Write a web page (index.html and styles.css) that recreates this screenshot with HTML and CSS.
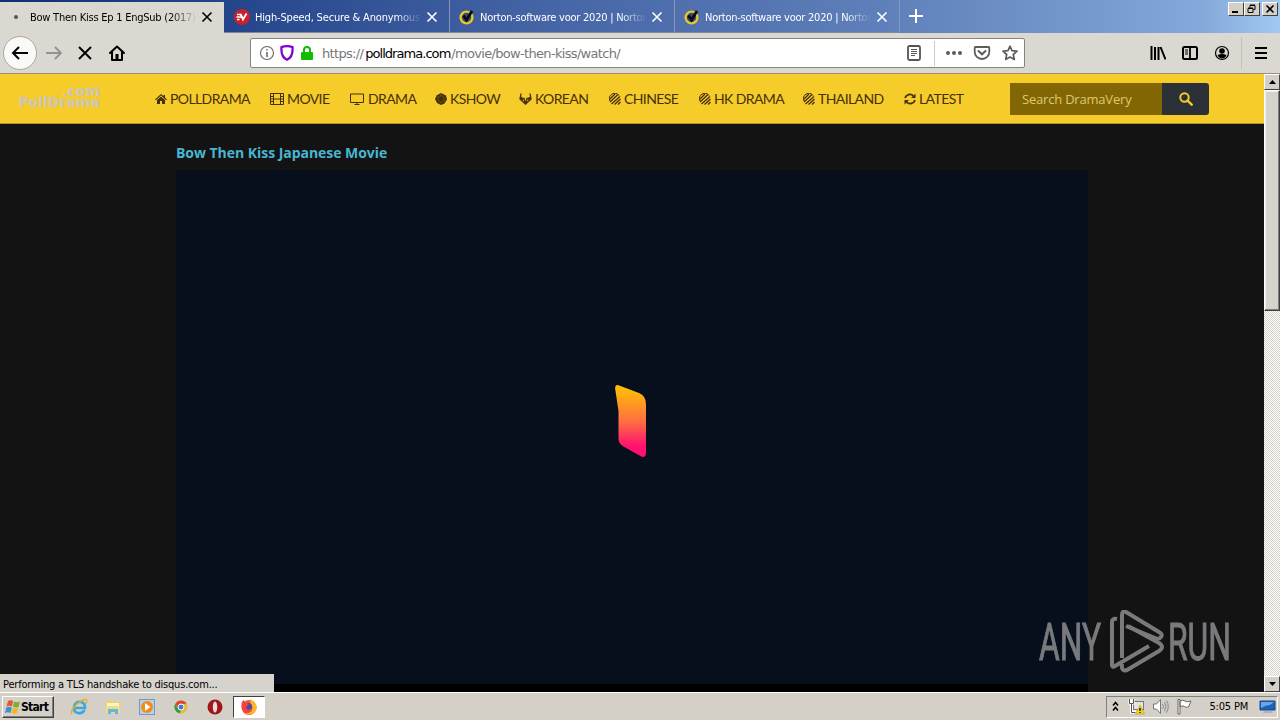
FILE: index.html
```html
<!DOCTYPE html>
<html lang="en">
<head>
    <meta charset="UTF-8">
    <title>Bow Then Kiss Ep 1 EngSub (2017)</title>
    <link rel="stylesheet" href="styles.css">
</head>
<body>
    <!-- shared icons -->
    <svg class="defs" width="0" height="0">
        <symbol id="close" viewBox="0 0 12 12"><path d="M1.5 1.5l9 9M10.5 1.5l-9 9" fill="none" stroke="currentColor" stroke-width="1.6"/></symbol>
        <symbol id="norton" viewBox="0 0 16 16"><circle cx="7.5" cy="8.500" r="5.900" fill="#3b4a70" stroke="#e3c630" stroke-width="2.400"/><path d="M4.500 6.500l3 4.500L13 2" fill="none" stroke="#090b14" stroke-width="2.800"/></symbol>
        <symbol id="stripes" viewBox="0 0 12 12"><path d="M1 6L6 1M1 9l8-7.500M2.500 11L11 3.500M5.500 11.500l6-5.500M9 11.500l2.500-2.500" fill="none" stroke="currentColor" stroke-width="1.300"/><path d="M1 8a5.300 5.300 0 0 1 9-5.500" fill="none" stroke="currentColor"/></symbol>
    </svg>

    <div class="window">
        <div class="tabs">
            <div class="tab active">
                <span class="dot"></span>
                <span class="tab-title">Bow Then Kiss Ep 1 EngSub (2017)</span>
                <svg class="close" width="12" height="12"><use href="#close"/></svg>
            </div>
            <div class="tab">
                <svg class="favicon" width="16" height="16" viewBox="0 0 16 16"><circle cx="8" cy="8" r="8" fill="#c9202d"/><path d="M3 5.500h4M2.500 8h5M3 10.500h2.500" stroke="#fff" stroke-width="1.300"/><path d="M6.500 5l2.500 5.500L12.500 4.500" fill="none" stroke="#fff" stroke-width="1.900"/></svg>
                <span class="tab-title vpn">High-Speed, Secure &amp; Anonymous VPN</span>
                <svg class="close" width="12" height="12"><use href="#close"/></svg>
            </div>
            <div class="tab">
                <svg class="favicon" width="16" height="16"><use href="#norton"/></svg>
                <span class="tab-title">Norton-software voor 2020 | Norton</span>
                <svg class="close" width="12" height="12"><use href="#close"/></svg>
            </div>
            <div class="tab">
                <svg class="favicon" width="16" height="16"><use href="#norton"/></svg>
                <span class="tab-title">Norton-software voor 2020 | Norton</span>
                <svg class="close" width="12" height="12"><use href="#close"/></svg>
            </div>
            <svg class="new-tab" width="16" height="16" viewBox="0 0 16 16"><path d="M8 1v14M1 8h14" stroke="#fff" stroke-width="2"/></svg>
            <div class="win-buttons">
                <span class="win-btn"><svg width="14" height="12" viewBox="0 0 14 12"><path d="M3 9h6" stroke="#000" stroke-width="2"/></svg></span>
                <span class="win-btn"><svg width="14" height="12" viewBox="0 0 14 12"><path d="M5 4.500V2.500h5v4H8.500M5 2h5M3 5h5M3 5.500h5v4H3z" fill="none" stroke="#000"/></svg></span>
                <span class="win-btn win-close"><svg width="14" height="12" viewBox="0 0 14 12"><path d="M3.500 2.500l7 7M10.500 2.500l-7 7" stroke="#000" stroke-width="1.600"/></svg></span>
            </div>
        </div>

        <div class="toolbar">
            <span class="back"><svg width="18" height="16" viewBox="0 0 18 16"><path d="M17 8H2M8 2L2 8l6 6" fill="none" stroke="#000" stroke-width="2"/></svg></span>
            <svg class="forward" width="18" height="16" viewBox="0 0 18 16"><path d="M1 8h15M10 2l6 6-6 6" fill="none" stroke="#929292" stroke-width="1.800"/></svg>
            <svg class="stop" width="16" height="16" viewBox="0 0 16 16"><path d="M2 2l12 12M14 2L2 14" stroke="#000" stroke-width="2"/></svg>
            <svg class="home" width="16" height="16" viewBox="0 0 16 16"><path d="M1 8l7-6.500L15 8M3 7v8h10V7" fill="none" stroke="#000" stroke-width="2" stroke-linejoin="round" stroke-linecap="round"/><path d="M6.500 9h3v6h-3z"/></svg>
            <div class="urlbar">
                <svg width="16" height="16" viewBox="0 0 16 16"><circle cx="8" cy="8" r="6.500" fill="none" stroke="#666" stroke-width="1.100"/><path d="M8 7v5M8 4v1.600" stroke="#666" stroke-width="1.500"/></svg>
                <svg width="16" height="16" viewBox="0 0 16 16"><path d="M8 1.200c2 0 3.800.3 5.500.9C14 8.500 12.500 12.800 8 14.800 3.500 12.800 2 8.500 2.500 2.100 4.200 1.500 6 1.200 8 1.200z" fill="none" stroke="#8000d7" stroke-width="2.300"/></svg>
                <svg width="16" height="16" viewBox="0 0 16 16"><rect x="2" y="7" width="12" height="8" rx="1" fill="#12bc00"/><path d="M5 8V5a3 3 0 0 1 6 0v3" fill="none" stroke="#12bc00" stroke-width="2"/></svg>
                <span class="url">https://<b>polldrama.com</b>/movie/bow-then-kiss/watch/</span>
                <svg class="reader" width="16" height="16" viewBox="0 0 16 16"><rect x="2" y="1" width="12" height="14" rx="1.500" fill="none" stroke="#555" stroke-width="1.800"/><path d="M5 4.500h6M5 6.500h6M5 8.500h6M5 10.500h4" stroke="#555"/></svg>
                <span class="url-sep"></span>
                <svg class="dots" width="18" height="16" viewBox="0 0 18 16" fill="#5c5c5c"><circle cx="3" cy="8" r="2"/><circle cx="9" cy="8" r="2"/><circle cx="15" cy="8" r="2"/></svg>
                <svg class="pocket" width="18" height="16" viewBox="0 0 18 16"><path d="M2.500 2h13q.800 0 .800.800V7A7.300 7 0 0 1 1.700 7V2.800Q1.700 2 2.500 2z" fill="none" stroke="#5c5c5c" stroke-width="1.800"/><path d="M5.500 6L9 9.300 12.500 6" fill="none" stroke="#5c5c5c" stroke-width="2" stroke-linecap="round"/></svg>
                <svg width="16" height="16" viewBox="0 0 16 16"><path d="M8 1.200l2 4.500 5 .5-3.700 3.300 1 4.900L8 12l-4.300 2.400 1-4.900L1 6.200l5-.5z" fill="none" stroke="#5c5c5c" stroke-width="1.700" stroke-linejoin="round"/></svg>
            </div>
            <div class="tools">
                <svg width="16" height="16" viewBox="0 0 16 16"><path d="M1.500 1v14M5 2v13M8.500 2v13M10.500 2l5 12.500" stroke="#000" stroke-width="2"/></svg>
                <svg width="16" height="16" viewBox="0 0 16 16"><rect x="1" y="2" width="14" height="12" rx="1.500" fill="none" stroke="#000" stroke-width="2"/><path d="M8 2v12" stroke="#000" stroke-width="1.800"/><path d="M3 5h3M3 7h3M3 9h3" stroke="#000"/></svg>
                <svg width="16" height="16" viewBox="0 0 16 16"><circle cx="8" cy="8" r="6.500" fill="none" stroke="#000" stroke-width="1.200"/><circle cx="8" cy="6" r="2.800"/><path d="M3.500 10q4.500-2 9 0-1.500 3.500-4.500 3.500T3.500 10z"/></svg>
            </div>
            <svg class="menu" width="12" height="16" viewBox="0 0 12 16"><path d="M0 3h12M0 8h12M0 13h12" stroke="#000" stroke-width="2"/></svg>
        </div>

        <div class="content">
            <div class="page">
                <header class="site-header">
                    <div class="logo"><span>.com</span><span>PollDrama</span></div>
                    <nav class="nav">
                        <a class="w95"><svg width="12" height="12" viewBox="0 0 12 12"><path d="M6 1L0 6.500l.8.800L6 2.600l5.200 4.700.8-.8-2-1.900V2H8.500v1.300z"/><path d="M6 3.500L2 7v4h3V8h2v3h3V7z"/></svg>POLLDRAMA</a>
                        <a class="w60"><svg width="14" height="12" viewBox="0 0 14 12"><path d="M.5.500h13v11H.5zM3.500.5v11M10.500.5v11M3.500 6h7M.5 3.500h3M.5 6h3M.5 8.500h3M10.500 3.500h3M10.500 6h3M10.500 8.500h3" fill="none" stroke="currentColor"/></svg>MOVIE</a>
                        <a class="w66"><svg width="15" height="12" viewBox="0 0 15 12"><path d="M.5 1h13v8.500H.5zM4.500 11.500h5M7 9.500v2" fill="none" stroke="currentColor"/></svg>DRAMA</a>
                        <a class="w64"><svg width="12" height="12" viewBox="0 0 12 12"><path d="M6 0l5 2.500 1 4-2.500 4L6 12l-4-2-2-4 1.500-3.500z"/><path d="M3 4.500l3-2 3 2v3.300L6 9.500 3 7.800zM6 2.500v-2M3 4.500L1 3.500M9 7.800l2 1" fill="none" stroke="#8a6e1b" stroke-width=".5"/></svg>KSHOW</a>
                        <a class="w70"><svg width="13" height="12" viewBox="0 0 13 12"><path d="M2 .5L1 6l5.500 5L12 6 11 .5M1 5.500h4L6.500 11 8 5.500h4" fill="none" stroke="currentColor" stroke-width="1.300"/><path d="M1 3.500L3 4l1.500 4L1 6zM12 3.500L10 4 8.500 8 12 6z"/></svg>KOREAN</a>
                        <a class="w70"><svg width="12" height="12"><use href="#stripes"/></svg>CHINESE</a>
                        <a class="w84"><svg width="12" height="12"><use href="#stripes"/></svg>HK DRAMA</a>
                        <a class="w81"><svg width="12" height="12"><use href="#stripes"/></svg>THAILAND</a>
                        <a class="w60"><svg width="12" height="12" viewBox="0 0 12 12"><path d="M1 5a5 5 0 0 1 8.500-2M11 7a5 5 0 0 1-8.500 2" fill="none" stroke="currentColor" stroke-width="1.800"/><path d="M11.500.500V5H7zM.5 11.500V7H5z"/></svg>LATEST</a>
                    </nav>
                    <div class="search">
                        <span class="search-input">Search DramaVery</span>
                        <span class="search-btn"><svg width="14" height="14" viewBox="0 0 14 14"><circle cx="5.500" cy="5.500" r="4.200" fill="none" stroke="#f5cc2a" stroke-width="2"/><path d="M8.500 8.500l4.200 4.200" stroke="#f5cc2a" stroke-width="2.400" stroke-linecap="round"/></svg></span>
                    </div>
                </header>
                <main class="main">
                    <h1>Bow Then Kiss Japanese Movie</h1>
                    <div class="player">
                        <svg width="32" height="74" viewBox="0 0 32 74">
                            <defs><linearGradient id="flame" x1="0" y1="0" x2="0" y2="1"><stop offset=".08" stop-color="#ffb80b"/><stop offset=".5" stop-color="#ff7040"/><stop offset=".85" stop-color="#ff126e"/></linearGradient></defs>
                            <path d="M3.500 1.200L24 9Q31 12 31 20V68Q31 75 25.500 72L8.500 62.500Q3.500 60 3.500 54V27L.2 5Q-.3.300 3.500 1.200z" fill="url(#flame)"/>
                        </svg>
                    </div>
                    <div class="player-bar"></div>
                </main>
                <div class="watermark">
                    <svg width="200" height="64" viewBox="0 0 200 64">
                        <g font-family="Roboto, sans-serif" font-size="51" fill="currentColor" stroke="currentColor" stroke-width="1">
                            <text x="1" y="50" textLength="62" lengthAdjust="spacingAndGlyphs">ANY</text>
                            <text x="130" y="50" textLength="63" lengthAdjust="spacingAndGlyphs">RUN</text>
                        </g>
                        <g fill="none" stroke="currentColor" stroke-width="4" stroke-linejoin="round">
                            <path d="M79 9q-5-1-5 3v43q0 3 3 1l34-20"/>
                            <path d="M84 48V5q0-5 4-3l33 20q4 2 2 5t-6 1L88 16"/>
                            <path d="M84 54q-1 8 5 6l32-19q6-4 0-8L90 16"/>
                        </g>
                    </svg>
                </div>
            </div>
            <div class="scrollbar">
                <span class="arrow"><svg width="7" height="4" viewBox="0 0 7 4"><path d="M0 4l3.500-4L7 4z"/></svg></span>
                <span class="thumb"></span>
                <span class="track"></span>
                <span class="arrow"><svg width="7" height="4" viewBox="0 0 7 4"><path d="M0 0l3.500 4L7 0z"/></svg></span>
            </div>
            <div class="status"><span>Performing a TLS handshake to disqus.com...</span></div>
        </div>

        <div class="taskbar">
            <div class="start">
                <svg width="16" height="16" viewBox="0 0 16 16"><path d="M3 2q3-1.500 5 0L7 7.500Q5 6 1.500 7.500z" fill="#e8572c"/><path d="M9 2.500q3 1.500 6 0L13.500 8Q11 9 8 7.500z" fill="#78ae38"/><path d="M1.300 8.500q3-1.500 5.500 0L5.500 14Q3 12.500 0 14z" fill="#3f8ed0"/><path d="M7.800 8.700q3 1.300 5.700 0L12 14q-2.500 1.200-5.500 0z" fill="#f0b824"/></svg>
                <span>Start</span>
            </div>
            <div class="launch">
                <svg width="18" height="18" viewBox="0 0 18 18"><path d="M4 10h11c.5-8-10-8-11-1-1 7 8 8 10.500 3" fill="none" stroke="#3ba6e0" stroke-width="2.600"/><path d="M2 16C-1 12 13-1 16.500 2c1 1 0 3-1 4" fill="none" stroke="#dcb52d" stroke-width="1.500"/></svg>
                <svg width="18" height="18" viewBox="0 0 18 18"><path d="M2 3h6l1 1h7v10H2z" fill="#ecd06a"/><path d="M3 5h12v3H3z" fill="#fff6c6"/><path d="M2 8h14v7H2z" fill="#f0dc85"/><path d="M4 16v-5h10v5h-3v-2H7v2z" fill="#62b6dd"/></svg>
                <svg width="18" height="18" viewBox="0 0 18 18"><rect x="1.500" y="1.500" width="15" height="15" fill="#b7d2e8" stroke="#6d9dc7"/><circle cx="9" cy="9" r="6" fill="#f38a1c"/><path d="M7 5l5.500 4L7 13z" fill="#fff"/></svg>
                <svg width="18" height="18" viewBox="0 0 18 18"><circle cx="9" cy="9" r="6.500" fill="#e7ba2f"/><path d="M3.400 5.700A6.500 6.500 0 0 1 14.600 5.700L9 6 7 11z" fill="#dd4435"/><path d="M3.300 5.800L7 12l2 0-1.400 3.400A6.500 6.500 0 0 1 3.300 5.800z" fill="#36994c"/><circle cx="9" cy="9" r="3" fill="#3e7dde" stroke="#fff"/></svg>
                <svg width="18" height="18" viewBox="0 0 18 18"><circle cx="9" cy="9" r="7.500" fill="#9f1518"/><ellipse cx="9" cy="9" rx="2.200" ry="5.500" fill="#e9dedc"/></svg>
            </div>
            <div class="task-active">
                <svg width="18" height="18" viewBox="0 0 18 18"><circle cx="9" cy="9.500" r="7.500" fill="#f35a28"/><path d="M10 1c4 2 7 5 6.500 10-1 5-7 7-11 4 7 1 9-6 5-9z" fill="#fdb72a"/><circle cx="8.500" cy="8.500" r="3.500" fill="#4a48a8"/><path d="M1.500 8Q1 4 3.500 2L6 5l3 1-2 2-1 2q2 3 5 1-1 4-5 4-4-1-4.500-7z" fill="#f5413f"/></svg>
            </div>
            <div class="tray">
                <svg class="chevrons" width="7" height="11" viewBox="0 0 7 11"><path d="M1 4.500l2.500-3L6 4.500M1 9.500l2.500-3L6 9.500" fill="none" stroke="#000" stroke-width="1.500"/></svg>
                <svg width="17" height="17" viewBox="0 0 17 17"><rect x="5.500" y="3.500" width="10" height="8" fill="#e4e4e4" stroke="#777"/><path d="M2 1v4h3V1M3.500 5v9h5" fill="none" stroke="#fff" stroke-width="3"/><path d="M1.500 1v4.500h4V1M3.500 6v8.500h4" fill="none" stroke="#555"/><path d="M12 7l4.500 9h-9z" fill="#f9d71c" stroke="#a18510" stroke-width=".5"/><path d="M12 10v3M12 14v1" stroke="#000" stroke-width="1.300"/></svg>
                <svg width="17" height="17" viewBox="0 0 17 17"><path d="M1.500 6h3l4-4.500v14L4.500 11h-3z" fill="#fff" stroke="#777"/><path d="M10.500 6q2 2.500 0 5M12.500 4q3 4.500 0 9M14.500 2.500q3.500 6 0 12" fill="none" stroke="#888"/></svg>
                <svg width="17" height="17" viewBox="0 0 17 17"><path d="M2 1.500h2V16H2zM4 3q3-1.500 5 0t6 0l-2.500 6q-2 1-4-.5T4 9z" fill="#fff" stroke="#666"/></svg>
                <span class="clock">5:05 PM</span>
                <svg class="desktop" width="17" height="15" viewBox="0 0 17 15"><path d="M1 2h15v9H1z" fill="#1d61bb" stroke="#174a89"/><path d="M2 3h13l-4 3q-4 0-9 3z" fill="#63a8e8"/><path d="M5 12h8l1 2H4z" fill="#a6b5c5"/></svg>
            </div>
        </div>
    </div>
</body>
</html>
```
FILE: styles.css
```css
* {
    box-sizing: border-box;
}
body {
    margin: 0;
    overflow: hidden;
    font-family: "DejaVu Sans Condensed", "DejaVu Sans", sans-serif;
    font-size: 11px;
    color: #000;
}
svg {
    display: block;
    flex: none;
}
.defs {
    position: absolute;
}
.window {
    width: 1280px;
    height: 720px;
    display: flex;
    flex-direction: column;
}

/* tab strip */
.tabs {
    height: 33px;
    display: flex;
    background: linear-gradient(90deg, #12306f 0, #25458b 225px, #4665a6 550px, #5e7fb9 880px, #7598cc 1080px, #83a8d9 1200px, #a1c8f1 1280px);
}
.tab {
    width: 225px;
    height: 33px;
    display: flex;
    align-items: center;
    padding: 1px 11px 0 9px;
    color: #fff;
    border-right: 1px solid #8796b6;
    border-bottom: 1px solid #7e8898;
}
.tab.active {
    width: 224px;
    margin-top: 2px;
    height: 31px;
    padding: 0 11px 1px 14px;
    background: #dad8d1;
    color: #000;
    border: none;
}
.tab.active + .tab {
    width: 226px;
    padding-left: 10px;
}
.dot {
    width: 4px;
    height: 4px;
    margin-right: 12px;
    border-radius: 50%;
    background: #555;
}
.favicon {
    margin-right: 5px;
}
.tab-title {
    width: 165px;
    padding-top: 1px;
    overflow: hidden;
    white-space: nowrap;
    letter-spacing: -0.24px;
    -webkit-mask-image: linear-gradient(90deg, #000 140px, transparent 167px);
    mask-image: linear-gradient(90deg, #000 140px, transparent 167px);
}
.vpn {
    letter-spacing: -0.17px;
}
.tab .close {
    margin-left: auto;
}
.new-tab {
    margin: 8px 0 0 8px;
}
.win-buttons {
    display: flex;
    margin: 2px 2px 0 auto;
}
.win-btn {
    width: 16px;
    height: 14px;
    background: #d4d0c8;
    border: 1px solid;
    border-color: #fff #404040 #404040 #fff;
}
.win-close {
    margin-left: 2px;
}

/* navigation toolbar */
.toolbar {
    height: 41px;
    display: flex;
    align-items: center;
    background: #dad8d1;
    border-bottom: 1px solid #99917b;
}
.back {
    width: 34px;
    height: 34px;
    margin-left: 3px;
    display: flex;
    align-items: center;
    justify-content: center;
    background: #f9f9f8;
    border: 1px solid #a9a7a1;
    border-radius: 50%;
}
.forward {
    margin-left: 8px;
}
.stop {
    margin-left: 14px;
}
.home {
    margin-left: 16px;
}
.urlbar {
    width: 775px;
    height: 30px;
    margin-left: 125px;
    padding: 0 6px 0 8px;
    display: flex;
    align-items: center;
    gap: 4px;
    background: #fff;
    border: 1px solid #85847f;
    border-radius: 2px;
}
.url {
    margin-left: 3px;
    font-family: "DejaVu Sans", sans-serif;
    font-size: 13px;
    letter-spacing: -0.68px;
    color: #777;
}
.url b {
    margin-left: 2px;
    margin-right: 1px;
    font-weight: normal;
    letter-spacing: -0.95px;
    color: #000;
}
.reader {
    margin-left: auto;
}
.url-sep {
    width: 1px;
    height: 25px;
    margin: 0 6px 0 8px;
    background: #ccc;
}
.pocket {
    margin: 0 6px;
}
.dots + .pocket {
    margin-left: 6px;
}
.tools {
    display: flex;
    gap: 16px;
    margin-left: 125px;
}
.menu {
    margin-left: auto;
    margin-right: 13px;
}
.tools::after {
    content: "";
    width: 1px;
    height: 32px;
    margin: -8px 0 -8px -5px;
    background: #c4c1b9;
}
.urlbar > svg:last-child {
    margin-left: 1px;
}

/* web page */
.content {
    height: 618px;
    display: flex;
    position: relative;
}
.page {
    width: 1264px;
    height: 618px;
    background: #131313;
    overflow: hidden;
    position: relative;
}
.site-header {
    height: 50px;
    display: flex;
    align-items: center;
    background: #f5cc2a;
    border-bottom: 1px solid #ae9130;
}
.logo {
    width: 84px;
    margin-left: 16px;
    margin-top: -3px;
    display: flex;
    flex-direction: column;
    align-items: flex-end;
    font: bold 14px/11px "DejaVu Sans", sans-serif;
    color: #ccc5bc;
}
.nav {
    display: flex;
    gap: 20px;
    margin-left: 55px;
    font: 14px "Lato", sans-serif;
    letter-spacing: -0.6px;
    color: #45300a;
    fill: #45300a;
}
.nav a {
    display: flex;
    align-items: center;
    gap: 3px;
    white-space: nowrap;
}
.w60 {
    width: 60px;
}
.w64 {
    width: 64px;
}
.w66 {
    width: 65px;
}
.w70 {
    width: 70px;
}
.w81 {
    width: 81px;
}
.w84 {
    width: 84px;
}
.w95 {
    width: 95px;
}
.search {
    display: flex;
    height: 32px;
    margin: 0 55px 0 auto;
}
.search-input {
    width: 152px;
    padding-left: 12px;
    font: 13px/33px "Open Sans", sans-serif;
    letter-spacing: -0.2px;
    background: #826603;
    color: #dfc872;
}
.search-btn {
    width: 47px;
    display: flex;
    align-items: center;
    justify-content: center;
    background: #2c3037;
    border-radius: 0 3px 3px 0;
}
.main {
    width: 912px;
    margin-left: 176px;
}
.main h1 {
    height: 46px;
    margin: 0;
    padding-top: 19px;
    font: bold 14px/20px "Open Sans", sans-serif;
    letter-spacing: -0.04px;
    color: #48b6d2;
}
.player {
    height: 514px;
    padding: 214px 0 0 439px;
    background: #070f1c;
}
.player-bar {
    height: 8px;
    background: #000;
}
.watermark {
    position: absolute;
    left: 1038px;
    top: 536px;
    color: #858688;
    opacity: 0.9;
}
.scrollbar {
    width: 16px;
    display: flex;
    flex-direction: column;
}
.arrow {
    height: 16px;
    display: flex;
    align-items: center;
    justify-content: center;
    background: #d4d0c8;
    border: 1px solid;
    border-color: #fff #404040 #404040 #fff;
}
.thumb {
    height: 221px;
    background: #d6d3cd;
    border: 1px solid;
    border-color: #fff #404040 #404040 #fff;
    box-shadow: inset -1px -1px #808080, inset 1px 1px #eee;
}
.track {
    flex: 1;
    background: repeating-conic-gradient(#d4d0c8 0 25%, #fff 0 50%) 0 0 / 2px 2px;
}
.status {
    position: absolute;
    left: 0;
    bottom: 0;
    width: 274px;
    height: 18px;
    padding-left: 3px;
    line-height: 21px;
    letter-spacing: -0.2px;
    background: #d6d3cd;
}

/* taskbar */
.taskbar {
    height: 28px;
    display: flex;
    align-items: center;
    background: #d4d0c8;
    border-top: 1px solid #fff;
}
.start {
    width: 52px;
    height: 22px;
    margin-left: 2px;
    padding-left: 2px;
    display: flex;
    align-items: center;
    font-size: 12px;
    font-weight: bold;
    letter-spacing: -0.7px;
    border: 1px solid;
    border-color: #fff #404040 #404040 #fff;
    box-shadow: inset -1px -1px #808080;
}
.launch {
    display: flex;
    gap: 16px;
    margin-left: 16px;
}
.task-active {
    width: 32px;
    height: 22px;
    margin-left: 9px;
    display: flex;
    align-items: center;
    justify-content: center;
    background: #fff;
    border: 1px solid;
    border-color: #404040 #fff #fff #404040;
}
.tray {
    width: 172px;
    height: 22px;
    margin: 0 2px 0 auto;
    padding: 0 1px 0 5px;
    display: flex;
    align-items: center;
    gap: 7px;
    border: 1px solid;
    border-color: #808080 #fff #fff #808080;
}
.chevrons {
    margin-right: 2px;
}
.clock {
    margin-left: auto;
    letter-spacing: -0.2px;
    white-space: nowrap;
}
.desktop {
    margin-left: 4px;
}
```
